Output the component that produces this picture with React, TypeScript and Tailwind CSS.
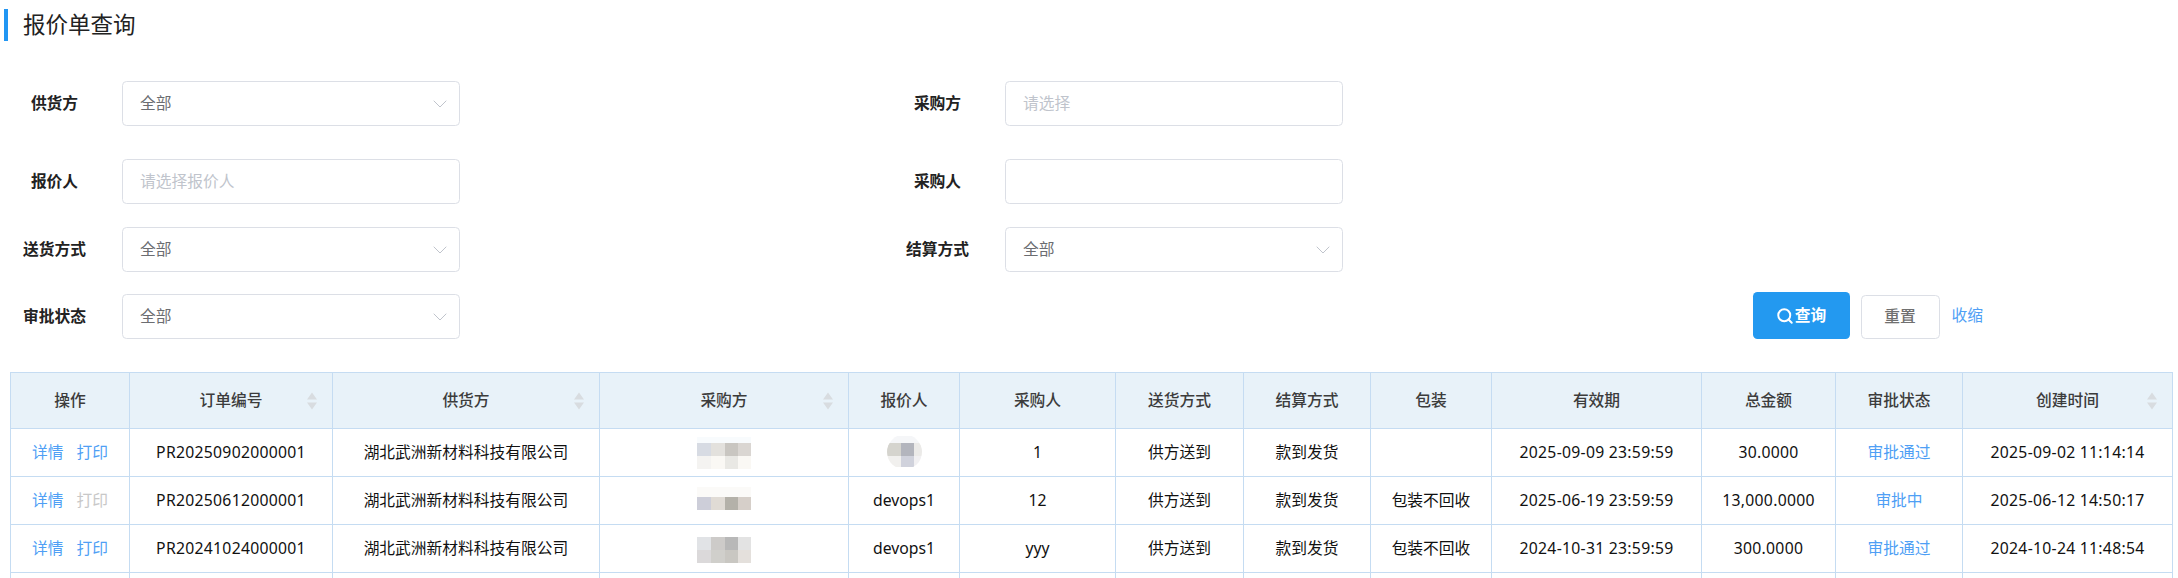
import { ChevronDown, Search } from 'lucide-react';

type Cell = [number, number, number, number, string];

const cols = [
  { label: '操作', w: 'w-[119px]' },
  { label: '订单编号', w: 'w-[203px]', sort: true },
  { label: '供货方', w: 'w-[267px]', sort: true },
  { label: '采购方', w: 'w-[249px]', sort: true },
  { label: '报价人', w: 'w-[111px]' },
  { label: '采购人', w: 'w-[156px]' },
  { label: '送货方式', w: 'w-[128px]' },
  { label: '结算方式', w: 'w-[127px]' },
  { label: '包装', w: 'w-[121px]' },
  { label: '有效期', w: 'w-[210px]' },
  { label: '总金额', w: 'w-[134px]' },
  { label: '审批状态', w: 'w-[127px]' },
  { label: '创建时间', w: 'w-[210px]', sort: true },
];

const rows = [
  {
    no: 'PR20250902000001', buyer: '1', pack: '', valid: '2025-09-09 23:59:59', total: '30.0000', status: '审批通过', created: '2025-09-02 11:14:14', print: true,
    quoter: '',
    buyerBlur: [
      [0, 8, 54, 6, '#f8fbfd'],
      [0, 14, 14, 13, '#d7dbe3'], [14, 14, 14, 13, '#e3e1dd'], [28, 14, 13, 13, '#c9c6c1'], [41, 14, 13, 13, '#dad6d2'],
      [0, 27, 14, 13, '#f4f3f1'], [14, 27, 14, 13, '#faf8f4'], [28, 27, 13, 13, '#e9e8e4'], [41, 27, 13, 13, '#faf8f4'],
    ] as Cell[],
    quoterBlur: [
      [0, 7, 35, 7, '#f5f6f8'],
      [0, 14, 14, 13, '#d5d4ce'], [14, 14, 13, 13, '#b3b5bd'], [27, 14, 8, 13, '#ebeae8'],
      [0, 27, 14, 11, '#f1f0ee'], [14, 27, 13, 11, '#d0d2dc'], [27, 27, 8, 11, '#f1f0f2'],
    ] as Cell[],
  },
  {
    no: 'PR20250612000001', buyer: '12', pack: '包装不回收', valid: '2025-06-19 23:59:59', total: '13,000.0000', status: '审批中', created: '2025-06-12 14:50:17', print: false,
    quoter: 'devops1',
    buyerBlur: [
      [0, 10, 54, 10, '#fbfaf8'],
      [0, 20, 14, 13, '#cdced9'], [14, 20, 14, 13, '#e0dbd5'], [28, 20, 13, 13, '#b4b1a9'], [41, 20, 13, 13, '#d6cfc9'],
    ] as Cell[],
  },
  {
    no: 'PR20241024000001', buyer: 'yyy', pack: '包装不回收', valid: '2024-10-31 23:59:59', total: '300.0000', status: '审批通过', created: '2024-10-24 11:48:54', print: true,
    quoter: 'devops1',
    buyerBlur: [
      [0, 12, 14, 13, '#e1e3e6'], [14, 12, 14, 13, '#cdcbc9'], [28, 12, 13, 13, '#b8b8b8'], [41, 12, 13, 13, '#e3e3e3'],
      [0, 25, 14, 13, '#dbd9da'], [14, 25, 14, 13, '#d0cfcb'], [28, 25, 13, 13, '#c9c7c2'], [41, 25, 13, 13, '#e4e0dc'],
    ] as Cell[],
  },
];

function Blur({ cells, w, round }: { cells: Cell[]; w: number; round?: boolean }) {
  return (
    <svg width={w} height={47} className="mx-auto block">
      {round && <clipPath id="blur-round"><circle cx={17.5} cy={23} r={17.5} /></clipPath>}
      <g clipPath={round ? 'url(#blur-round)' : undefined}>
        {cells.map(([x, y, cw, ch, fill], i) => <rect key={i} x={x} y={y} width={cw} height={ch} fill={fill} />)}
      </g>
    </svg>
  );
}

function Field({ label, value, placeholder, select }: { label: string; value?: string; placeholder?: string; select?: boolean }) {
  return (
    <div className="flex h-[45px] w-[883px] items-center">
      <label className="mr-[13px] w-[109px] text-center font-semibold text-[#222]">{label}</label>
      <div className="flex h-[45px] w-[338px] items-center justify-between rounded-[4.5px] border border-[#dcdfe6] pl-[17px] pr-[7px]">
        <span className={`mt-[1px] ${value ? 'text-[#6b6d71]' : 'text-[#c0c4cc]'}`}>{value ?? placeholder}</span>
        {select && <ChevronDown size={24} strokeWidth={1} className="text-[#c0c4cc]" />}
      </div>
    </div>
  );
}

function SortIcon() {
  return (
    <div className="absolute right-[15px] top-1/2 flex -translate-y-1/2 flex-col gap-[3px]">
      <div className="h-0 w-0 border-x-[5px] border-b-[7px] border-x-transparent border-b-[#d8dce0]" />
      <div className="h-0 w-0 border-x-[5px] border-t-[7px] border-x-transparent border-t-[#d8dce0]" />
    </div>
  );
}

export default function App() {
  const td = 'border border-[#c5dcf2] p-0 text-center text-[#111]';
  const latin = 'tracking-[0.27px]';
  return (
    <div className="h-screen overflow-hidden bg-white pt-[9px] font-['Noto_Sans','Noto_Sans_CJK_SC',sans-serif] text-[15.75px]">
      <div className="ml-[4px] border-l-[4px] border-[#2196f3] pl-[15px] text-[22.5px] leading-[32px] text-[#222]">报价单查询</div>

      <div className="mt-[40px]">
        <div className="flex"><Field label="供货方" value="全部" select /><Field label="采购方" placeholder="请选择" /></div>
        <div className="mt-[33px] flex"><Field label="报价人" placeholder="请选择报价人" /><Field label="采购人" /></div>
        <div className="mt-[23px] flex"><Field label="送货方式" value="全部" select /><Field label="结算方式" value="全部" select /></div>
        <div className="mt-[20px] flex items-end justify-between pr-[195px]">
          <Field label="审批状态" value="全部" select />
          <div className="flex items-end">
            <button className="flex h-[47px] w-[97px] items-center justify-center gap-[1px] rounded-[4.5px] bg-[#2399f0] font-semibold text-white"><Search size={18} strokeWidth={2.6} />查询</button>
            <button className="ml-[11px] h-[44px] w-[79px] rounded-[4.5px] border border-[#dcdfe6] font-medium text-[#707070]">重置</button>
            <span className="mb-[11px] ml-[12px] text-[#4f9ff5]">收缩</span>
          </div>
        </div>
      </div>

      <table className="ml-[10px] mt-[33px] w-[2162px] table-fixed border-collapse">
        <thead>
          <tr className="h-[56px] bg-[#e8f2f9]">
            {cols.map((c) => (
              <th key={c.label} className={`relative border border-[#c5dcf2] pt-[1px] font-medium text-[#3c3c3c] ${c.w}`}>
                {c.label}
                {c.sort && <SortIcon />}
              </th>
            ))}
          </tr>
        </thead>
        <tbody>
          {rows.map((r) => (
            <tr key={r.no} className="h-[48px]">
              <td className={td}>
                <span className="text-[#4f9ff5]">详情</span>
                <span className={`ml-[13px] ${r.print ? 'text-[#4f9ff5]' : 'text-[#c8c8c8]'}`}>打印</span>
              </td>
              <td className={`${td} ${latin}`}>{r.no}</td>
              <td className={td}>湖北武洲新材料科技有限公司</td>
              <td className={td}><Blur cells={r.buyerBlur} w={54} /></td>
              <td className={td}>{r.quoterBlur ? <Blur cells={r.quoterBlur} w={35} round /> : r.quoter}</td>
              <td className={td}>{r.buyer}</td>
              <td className={td}>供方送到</td>
              <td className={td}>款到发货</td>
              <td className={td}>{r.pack}</td>
              <td className={`${td} ${latin}`}>{r.valid}</td>
              <td className={`${td} ${latin}`}>{r.total}</td>
              <td className={`${td} !text-[#4f9ff5]`}>{r.status}</td>
              <td className={`${td} ${latin}`}>{r.created}</td>
            </tr>
          ))}
          <tr className="h-[48px]">
            {cols.map((c) => <td key={c.label} className={td} />)}
          </tr>
        </tbody>
      </table>
    </div>
  );
}
